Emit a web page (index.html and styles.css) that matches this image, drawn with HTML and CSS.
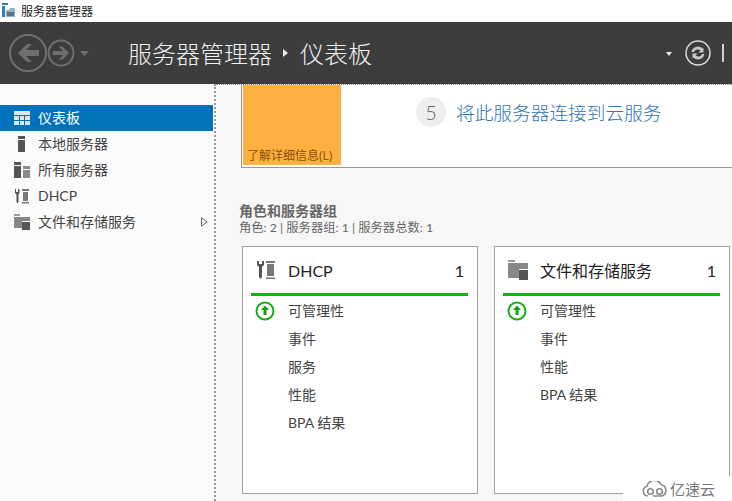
FILE: index.html
```html
<!DOCTYPE html>
<html lang="zh-CN">
<head>
<meta charset="utf-8">
<title>服务器管理器</title>
<link rel="stylesheet" href="styles.css">
</head>
<body>
<div class="titlebar">
  <svg class="app-icon" width="16" height="16" viewBox="0 0 16 16"><rect x="1" y="1" width="6" height="2" fill="#2e7fc0"/><rect x="1" y="4" width="3" height="11" fill="#2e7fc0"/><path d="M5 8h3l1-2h5v9H5z" fill="#8fb3c9"/><path d="M6 10h7v4H6z" fill="#5b6f80"/></svg>
  <span class="app-name">服务器管理器</span>
</div>
<header class="header">
  <div class="nav">
    <svg width="82" height="42" viewBox="0 0 82 42">
      <g fill="none" stroke="#6f6f6f" stroke-width="2"><circle cx="19" cy="21" r="18"/><circle cx="52" cy="21" r="12.500"/></g>
      <path d="M9 21l9-9h5l-6 6h13v6H17l6 6h-5z" fill="#6f6f6f"/>
      <path d="M60 21l-6.500-6.500h-3.500l4 4.500H44v4h10l-4 4.500h3.500z" fill="#6f6f6f"/>
      <path d="M71 19h9l-4.500 5z" fill="#6f6f6f"/>
    </svg>
  </div>
  <h1 class="crumb">服务器管理器<span class="crumb-sep"></span>仪表板</h1>
  <div class="tools">
    <span class="drop"></span>
    <svg width="28" height="28" viewBox="0 0 28 28"><circle cx="14" cy="14" r="12" fill="none" stroke="#dcdcdc" stroke-width="1.500"/><path d="M7.500 13a6.500 6.500 0 0 1 11-3.500l1-1v5h-5l2-2a4 4 0 0 0-6.500 1.500zM20.500 15a6.500 6.500 0 0 1-11 3.500l-1 1v-5h5l-2 2a4 4 0 0 0 6.500-1.500z" fill="#c8c8c8"/></svg>
    <span class="vbar"></span>
  </div>
</header>
<div class="body">
  <nav class="side">
    <a class="item active">
      <svg width="18" height="16" viewBox="0 0 18 16"><path d="M1 1h16v4H1zM1 6h5v4H1zM7 6h4v4H7zM12 6h5v4h-5zM1 11h5v4H1zM7 11h4v4H7zM12 11h5v4h-5z" fill="#d7e8f5"/></svg>
      <span>仪表板</span>
    </a>
    <a class="item">
      <svg width="18" height="16" viewBox="0 0 18 16"><path d="M5 0h7v3H5zM5 4h7v12H5z" fill="#555"/></svg>
      <span>本地服务器</span>
    </a>
    <a class="item">
      <svg width="18" height="16" viewBox="0 0 18 16"><path d="M1 0h7v3H1zM1 4h7v12H1z" fill="#555"/><path d="M10 4h7v3h-7zM10 8h7v8h-7z" fill="#888"/></svg>
      <span>所有服务器</span>
    </a>
    <a class="item">
      <svg width="18" height="16" viewBox="0 0 18 16"><path d="M3 1v3h2V1h1.500v4L5.500 6.500V14l-1 1.500-1-1.500V6.500L2 5V1z" fill="#555"/><path d="M9 1h7v2H9zM10 4h5v9h-5zM9 14h7v1.500H9z" fill="#777"/></svg>
      <span>DHCP</span>
    </a>
    <a class="item">
      <svg width="18" height="16" viewBox="0 0 18 16"><path d="M1 0h6v2H1z" fill="#999"/><path d="M1 3h16v4H9v7H1z" fill="#888"/><path d="M9 8h8v8H9z" fill="#555"/></svg>
      <span>文件和存储服务</span>
      <svg class="expander" width="7" height="10" viewBox="0 0 7 10"><path d="M0.500 0.800L6.200 5L0.500 9.200z" fill="#fff" stroke="#666"/></svg>
    </a>
  </nav>
  <main class="main">
    <section class="welcome">
      <div class="tile"><span class="tile-link">了解详细信息(L)</span></div>
      <div class="step">
        <span class="step-num">5</span>
        <span class="step-text">将此服务器连接到云服务</span>
      </div>
    </section>
    <h2 class="group-title">角色和服务器组</h2>
    <p class="group-sub">角色: 2 | 服务器组: 1 | 服务器总数: 1</p>
    <div class="cards">
      <article class="card">
        <div class="card-head">
          <svg class="card-icon" width="20" height="20" viewBox="0 0 20 20"><path d="M1 1v4l2 2v10l1.500 2 1.500-2V7l2-2V1L6 1v3H3V1z" fill="#555"/><path d="M10 1h9v2h-9zM11 4h7v12h-7zM10 17.500h9V19h-9z" fill="#777"/></svg>
          <span class="card-name">DHCP</span>
          <span class="card-count">1</span>
        </div>
        <div class="card-line"></div>
        <ul class="rows">
          <li class="row status">
            <svg class="ok" width="20" height="20" viewBox="0 0 20 20"><circle cx="10" cy="10" r="8.500" fill="#fff" stroke="#14b014" stroke-width="2"/><path d="M10 4.500l4 4.500h-2.500v5h-3V9H6z" fill="#14a014"/></svg>
            可管理性
          </li>
          <li class="row">事件</li>
          <li class="row">服务</li>
          <li class="row">性能</li>
          <li class="row">BPA 结果</li>
        </ul>
      </article>
      <article class="card">
        <div class="card-head">
          <svg class="card-icon" width="20" height="20" viewBox="0 0 20 20"><path d="M0 0h7v2H0z" fill="#999"/><path d="M0 3h20v6H11v9H0z" fill="#888"/><path d="M11 10h9v10h-9z" fill="#555"/></svg>
          <span class="card-name">文件和存储服务</span>
          <span class="card-count">1</span>
        </div>
        <div class="card-line"></div>
        <ul class="rows">
          <li class="row status">
            <svg class="ok" width="20" height="20" viewBox="0 0 20 20"><circle cx="10" cy="10" r="8.500" fill="#fff" stroke="#14b014" stroke-width="2"/><path d="M10 4.500l4 4.500h-2.500v5h-3V9H6z" fill="#14a014"/></svg>
            可管理性
          </li>
          <li class="row">事件</li>
          <li class="row">性能</li>
          <li class="row">BPA 结果</li>
        </ul>
      </article>
    </div>
  </main>
</div>
<div class="watermark">
  <svg width="26" height="16" viewBox="0 0 26 16"><g fill="none" stroke="#8a8a8a" stroke-width="1.600"><path d="M6 15a5 5 0 0 1-1-9.800A7.500 7.500 0 0 1 19 3.500a6 6 0 0 1 1 11.500H11"/><circle cx="8.500" cy="10.500" r="2.800"/><circle cx="17.500" cy="10.500" r="2.800"/></g></svg>
  <span>亿速云</span>
</div>
</body>
</html>
```
FILE: styles.css
```css
* { box-sizing: border-box; }
html, body { margin: 0; padding: 0; }
body {
  width: 732px;
  height: 501px;
  overflow: hidden;
  position: relative;
  display: flex;
  flex-direction: column;
  background: #fff;
  font-family: Lato, "Noto Sans CJK SC", sans-serif;
  font-size: 14px;
  color: #333;
}
.titlebar {
  height: 22px;
  display: flex;
  align-items: center;
  gap: 4px;
  padding: 0 0 2px 1px;
  background: #fff;
  flex: none;
}
.app-name { font-size: 12px; color: #222; }
.header {
  height: 62px;
  flex: none;
  display: flex;
  align-items: center;
  background: #3d3d3d;
  color: #f0f0f0;
}
.nav { width: 128px; padding: 0 0 0 9px; display: flex; }
.crumb {
  margin: 0 0 2px;
  font-size: 24px;
  font-weight: 300;
  color: #f0f0f0;
  display: flex;
  align-items: center;
  white-space: nowrap;
}
.crumb-sep {
  width: 0;
  height: 0;
  margin: 2px 12px 0 11px;
  border-left: 5px solid #eee;
  border-top: 4px solid transparent;
  border-bottom: 4px solid transparent;
}
.tools {
  margin-left: auto;
  display: flex;
  align-items: center;
  padding-right: 8px;
}
.drop {
  width: 0;
  height: 0;
  margin: 2px 12px 0 0;
  border-top: 4px solid #eee;
  border-left: 3.500px solid transparent;
  border-right: 3.500px solid transparent;
}
.vbar { width: 2px; height: 18px; margin-left: 10px; background: #cfcfcf; }
.body { flex: 1; display: flex; min-height: 0; }
.side {
  width: 216px;
  flex: none;
  padding-top: 21px;
  background: #fbfbfb;
  border-right: 2px dotted #9a9a9a;
}
.item {
  height: 26px;
  margin-right: 1px;
  display: flex;
  align-items: center;
  gap: 7px;
  padding: 0 5px 2px 13px;
  font-size: 14px;
  color: #444;
}
.item svg { margin-top: 2px; }
.item.active { background: #0072bc; color: #fff; }
.item svg.expander { margin: 2px 0 0 auto; }
.main {
  flex: 1;
  min-width: 0;
  padding: 0 0 0 23px;
  background: #f7f7f7;
  border-top: 1px dotted #888;
}
.welcome {
  height: 83px;
  margin-left: 2px;
  display: flex;
  background: #fff;
  border-left: 1px solid #999;
  border-bottom: 1px solid #999;
}
.tile {
  width: 98px;
  height: 80px;
  margin-left: 1px;
  padding: 0 0 1px 4px;
  display: flex;
  align-items: flex-end;
  background: #ffb040;
}
.tile-link { font-family: "Open Sans", "Noto Sans CJK SC", sans-serif; font-size: 12px; color: #8a4a00; }
.step {
  display: flex;
  align-items: center;
  gap: 10px;
  height: 53px;
  padding-left: 75px;
}
.step-num {
  width: 30px;
  height: 30px;
  border-radius: 50%;
  background: #eee;
  color: #666;
  font-size: 20px;
  font-weight: 300;
  display: flex;
  align-items: center;
  justify-content: center;
}
.step-text { font-size: 18.700px; font-weight: 300; color: #2e75b6; white-space: nowrap; }
.group-title {
  margin: 34px 0 0;
  font-size: 14px;
  line-height: 18px;
  font-weight: 700;
  color: #666;
}
.group-sub {
  margin: 0;
  font-size: 12.300px;
  line-height: 16px;
  color: #666;
}
.cards { display: flex; gap: 16px; margin: 10px 0 0 3px; }
.card {
  width: 236px;
  height: 248px;
  flex: none;
  padding: 0 9px 0 8px;
  background: #fff;
  border: 1px solid #a0a0a0;
}
.card-head {
  height: 46px;
  display: flex;
  align-items: center;
  color: #222;
}
.card-icon { margin: 0 12px 0 5px; flex: none; }
.card-name { font-size: 16px; }
.card-count { margin-left: auto; margin-right: 4px; font-size: 16px; }
.card-line { height: 3px; background: #10b510; }
.rows { list-style: none; margin: 0; padding: 0; }
.row {
  height: 28px;
  display: flex;
  align-items: center;
  padding-left: 37px;
  font-size: 14px;
  color: #444;
  position: relative;
}
.ok { position: absolute; left: 4px; top: 5px; }
.watermark {
  position: absolute;
  left: 623px;
  top: 476px;
  width: 109px;
  height: 25px;
  display: flex;
  align-items: center;
  gap: 2px;
  padding-left: 19px;
  background: #fff;
  color: #777;
  font-size: 15px;
}
```
